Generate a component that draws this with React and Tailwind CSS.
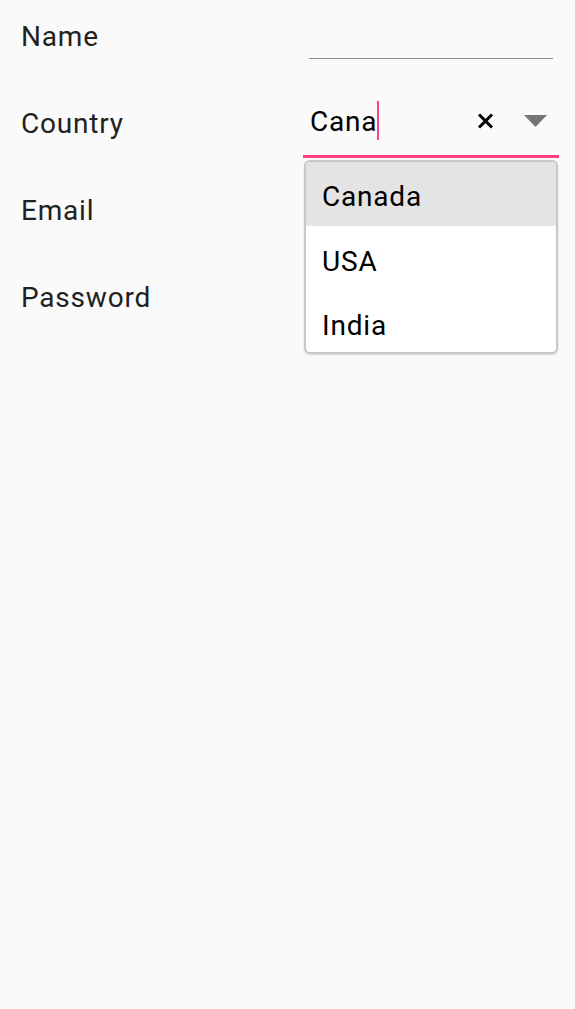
import { useState } from "react";

const countries = ["Canada", "USA", "India"];

function Label({ children }) {
  return <span className="text-[28px] leading-none tracking-[0.8px] text-[#212121]">{children}</span>;
}

function App() {
  const [query] = useState("Cana");

  return (
    <div className="min-h-screen bg-[#fafafa] font-['Roboto','Liberation_Sans',sans-serif]">
      <div className="flex flex-col gap-[13px] pl-[21px] pr-[16px]">
        {/* name */}
        <div className="flex h-[74px] items-center justify-between">
          <Label>Name</Label>
          <div className="flex h-full w-[256px] flex-col justify-end px-[6px] pb-[15px]">
            <div className="h-px bg-[#8a8a8a]" />
          </div>
        </div>

        {/* country (focused, with popup) */}
        <div className="flex h-[74px] items-center justify-between">
          <Label>Country</Label>
          <div className="relative flex h-full w-[256px] flex-col justify-end pb-[3px]">
            <div className="mb-[15px] flex h-[40px] items-center pl-[7px] pr-[12px]">
              <div className="flex flex-1 items-center">
                <span className="pt-[3px] text-[28px] leading-none tracking-[0.8px] text-black">{query}</span>
                <span className="h-[39px] w-[2px] bg-[#ff4081]" />
              </div>
              <svg width="17" height="16" viewBox="0 0 17 16" className="mt-px">
                <path d="M2 1.5 L15 14.5 M15 1.5 L2 14.5" stroke="#000" strokeWidth="3" />
              </svg>
              <svg width="23" height="12" viewBox="0 0 23 12" className="ml-[30px] mt-px">
                <path d="M0 0 H23 L11.5 12 Z" fill="#757575" />
              </svg>
            </div>
            <div className="h-[3px] bg-[#ff4081]" />

            <ul className="absolute left-px top-[73px] z-10 w-[254px] overflow-hidden rounded-[6px] border-2 border-[#c8c8c8] bg-white shadow-[0_1px_2px_rgba(0,0,0,0.15)]">
              {countries.map((c, i) => (
                <li
                  key={c}
                  className={
                    i === 0
                      ? "flex h-[64px] items-center bg-[#e4e4e4] pl-[16px] pt-[5px] text-[28px] tracking-[0.8px] text-black"
                      : i === 1
                      ? "flex h-[66px] items-center pl-[16px] pt-[5px] text-[28px] tracking-[0.8px] text-black"
                      : "flex h-[60px] items-center pl-[16px] pt-[8px] text-[28px] tracking-[0.8px] text-black"
                  }
                >
                  {c}
                </li>
              ))}
            </ul>
          </div>
        </div>

        <div className="flex h-[74px] items-center">
          <Label>Email</Label>
        </div>
        <div className="flex h-[74px] items-center">
          <Label>Password</Label>
        </div>
      </div>
    </div>
  );
}

export default App;
